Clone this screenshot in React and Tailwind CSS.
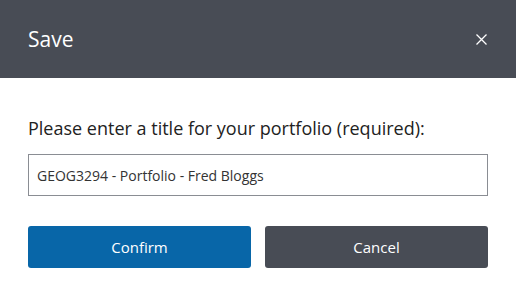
import React, { useState } from 'react';

const SaveDialog = () => {
  const [title, setTitle] = useState('GEOG3294 - Portfolio - Fred Bloggs');

  return (
    <div className="w-[516px] h-[298px] bg-white flex flex-col font-['Open_Sans',sans-serif]">
      {/* Header */}
      <div className="h-[78px] bg-[#484c55] flex items-center justify-between pl-[28px] pr-[29px]">
        <h2 className="text-[21px] text-white leading-none">Save</h2>
        <button className="text-white" aria-label="Close">
          <svg width="11" height="11" viewBox="0 0 11 11" stroke="currentColor" strokeWidth="1.3" fill="none">
            <path d="M0.5 0.5L10.5 10.5M10.5 0.5L0.5 10.5" />
          </svg>
        </button>
      </div>

      {/* Body */}
      <div className="px-[28px] pt-[38px] flex flex-col">
        <label className="text-[18px] text-[#222] leading-[24px]">
          Please enter a title for your portfolio (required):
        </label>
        <input
          value={title}
          onChange={(e) => setTitle(e.target.value)}
          className="mt-[14px] h-[42px] w-full border border-[#8a8d93] px-[8px] text-[14px] text-[#333] outline-none"
        />
        <div className="mt-[30px] grid grid-cols-2 gap-[14px]">
          <button className="h-[42px] rounded-[3px] bg-[#0866a8] text-white text-[15px]">Confirm</button>
          <button className="h-[42px] rounded-[3px] bg-[#484c55] text-white text-[15px]">Cancel</button>
        </div>
      </div>
    </div>
  );
};

export default function App() {
  return <SaveDialog />;
}
